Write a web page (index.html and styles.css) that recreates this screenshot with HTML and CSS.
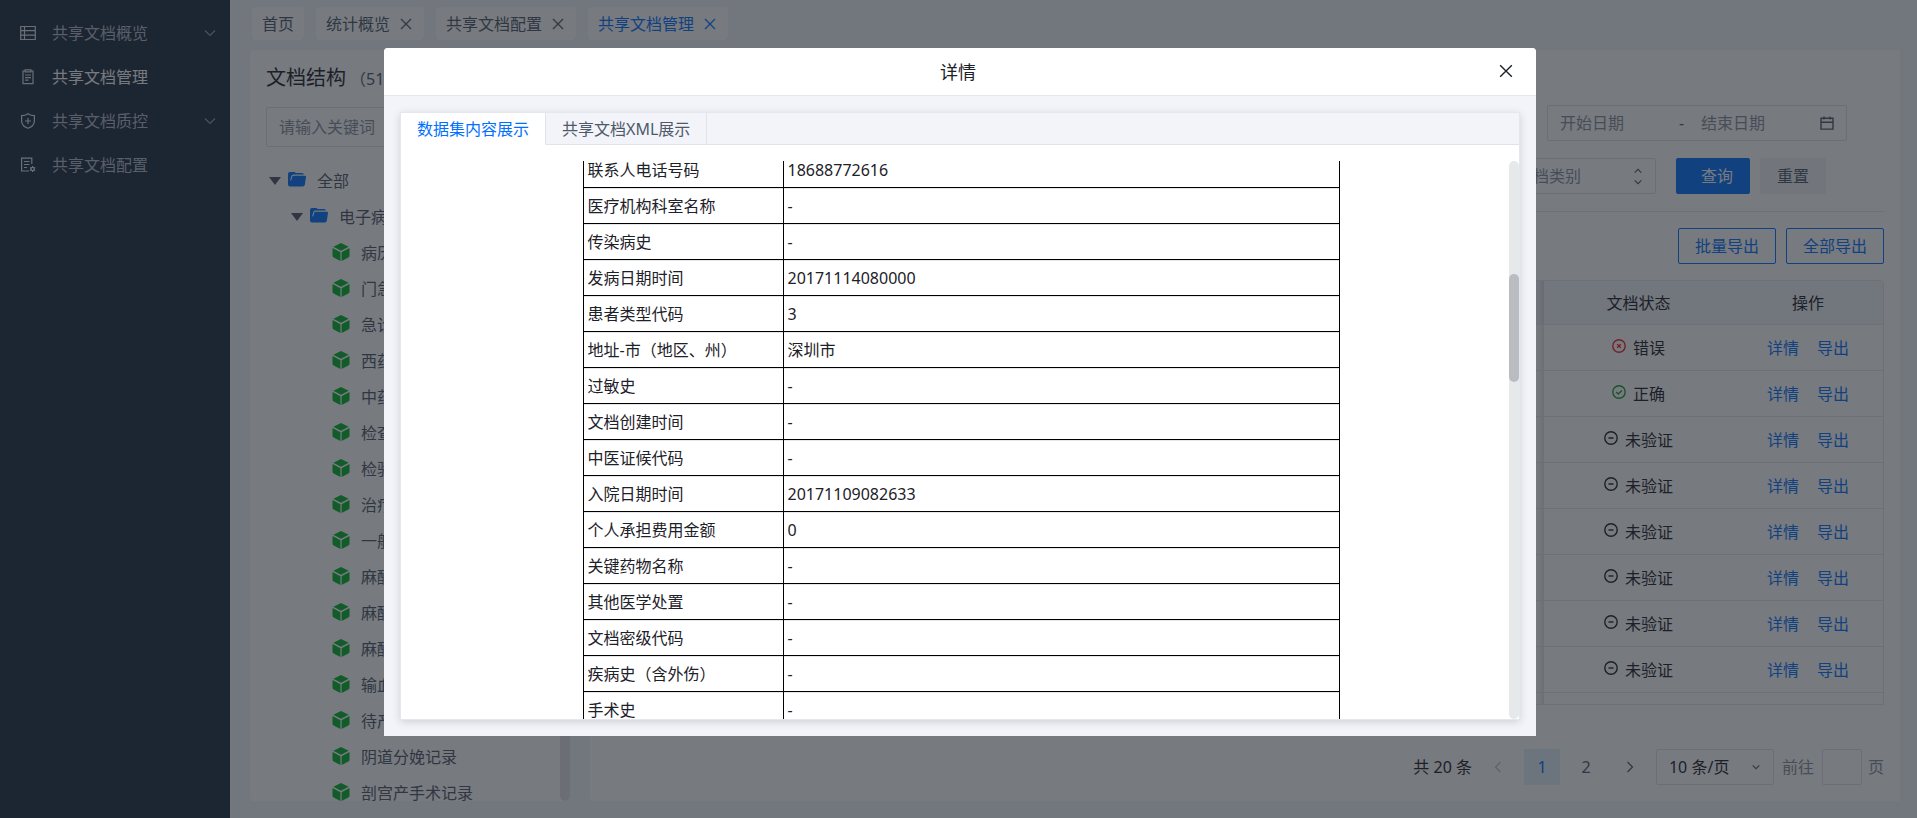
FILE: index.html
```html
<!DOCTYPE html>
<html lang="zh-CN">
<head>
<meta charset="utf-8">
<title>共享文档管理</title>
<link rel="stylesheet" href="styles.css">
</head>
<body>
<svg class="sprite" aria-hidden="true">
  <symbol id="i-list" viewBox="0 0 16 16"><path d="M.7 1.500h14.600v13H.7zM.7 5.700h14.600M.7 10.200h14.600M4.500 1.500v13"/></symbol>
  <symbol id="i-clip" viewBox="0 0 16 16"><path d="M5 2H3v12.600h10V2h-2M5 .9h6v2H5zM5 6h6M5 8.600h6M5 11.200h3.500"/></symbol>
  <symbol id="i-shield" viewBox="0 0 16 16"><path d="M8 .7c2 1.400 4 2 6.400 2v5.300c0 3.300-2.400 5.800-6.400 7.300-4-1.500-6.400-4-6.400-7.300V2.700C4 2.700 6 2.100 8 .7zM8 5v6M5 8h6"/></symbol>
  <symbol id="i-conf" viewBox="0 0 16 16"><path d="M9 14H1.600V1.200h10.200V7M4 4.500h5.500M4 7.500h5.500M4 10.500h3"/><circle cx="12.600" cy="12" r="1.600"/><path d="M12.600 9v1.400M12.600 13.600V15M10 10.500l1.200.7M14 12.800l1.200.7M10 13.500l1.200-.7M14 11.200l1.200-.7"/></symbol>
  <symbol id="i-down" viewBox="0 0 12 12"><path d="M1 3.500l5 5 5-5"/></symbol>
  <symbol id="i-up" viewBox="0 0 12 12"><path d="M1 8.500l5-5 5 5"/></symbol>
  <symbol id="i-left" viewBox="0 0 12 12"><path d="M8.500 1l-5 5 5 5"/></symbol>
  <symbol id="i-right" viewBox="0 0 12 12"><path d="M3.500 1l5 5-5 5"/></symbol>
  <symbol id="i-x" viewBox="0 0 12 12"><path d="M1 1l10 10M11 1L1 11"/></symbol>
  <symbol id="i-folder" viewBox="0 0 18 15"><path fill="currentColor" stroke="none" d="M2 0h4.500l1.300 1H14A2 2 0 0 1 16 2.600H5.400A2.200 2.200 0 0 0 3.300 4.200L2.200 8.200l1 .3 1.100-3.900A1.300 1.300 0 0 1 5.500 3.700h11.300A1.200 1.200 0 0 1 18 5.100l-1.200 7.700A2 2 0 0 1 14.800 14.500H2A2 2 0 0 1 0 12.500V2a2 2 0 0 1 2-2z"/></symbol>
  <symbol id="i-cube" viewBox="0 0 18 18"><path fill="currentColor" stroke="none" d="M9 0l7.600 3.800L9 7.800 1.400 3.800zM.5 5l7.900 4.200V18L1.700 14.600A2 2 0 0 1 .5 12.800zM17.500 5L9.600 9.200V18l6.700-3.400a2 2 0 0 0 1.200-1.800z"/></symbol>
  <symbol id="i-cal" viewBox="0 0 14 14"><path d="M1 2.200h12v10.900H1zM1 6.300h12M4 .5v3M10 .5v3"/></symbol>
  <symbol id="i-err" viewBox="0 0 14 14"><circle cx="7" cy="7" r="6.200"/><path d="M5.200 5.200l3.600 3.600M8.800 5.200L5.200 8.800"/></symbol>
  <symbol id="i-ok" viewBox="0 0 14 14"><circle cx="7" cy="7" r="6.200"/><path d="M4.200 7l2.100 2 3.600-3.600"/></symbol>
  <symbol id="i-none" viewBox="0 0 14 14"><circle cx="7" cy="7" r="6.200"/><path d="M4.500 7h5"/></symbol>
</svg>

<div class="app">
  <nav class="sidebar">
    <a class="nav-item" href="#"><svg class="ic16"><use href="#i-list"/></svg><span>共享文档概览</span><svg class="ic12"><use href="#i-down"/></svg></a>
    <a class="nav-item active" href="#"><svg class="ic16"><use href="#i-clip"/></svg><span>共享文档管理</span></a>
    <a class="nav-item" href="#"><svg class="ic16"><use href="#i-shield"/></svg><span>共享文档质控</span><svg class="ic12"><use href="#i-down"/></svg></a>
    <a class="nav-item" href="#"><svg class="ic16"><use href="#i-conf"/></svg><span>共享文档配置</span></a>
  </nav>

  <main class="main">
    <div class="page-tabs">
      <a class="page-tab" href="#">首页</a>
      <a class="page-tab" href="#">统计概览<svg class="ic12"><use href="#i-x"/></svg></a>
      <a class="page-tab" href="#">共享文档配置<svg class="ic12"><use href="#i-x"/></svg></a>
      <a class="page-tab current" href="#">共享文档管理<svg class="ic12"><use href="#i-x"/></svg></a>
    </div>

    <div class="panels">
      <section class="panel tree-panel">
        <h2 class="tree-title">文档结构<small>（51）</small></h2>
        <input class="field tree-search" type="text" placeholder="请输入关键词" aria-label="关键词">
        <div class="tree-wrap">
          <ul class="tree">
            <li class="node l1"><i class="caret"></i><svg class="folder"><use href="#i-folder"/></svg><span>全部</span></li>
            <li class="node l2"><i class="caret"></i><svg class="folder"><use href="#i-folder"/></svg><span>电子病历</span></li>
            <li class="node l3"><svg class="cube"><use href="#i-cube"/></svg><span>病历概要</span></li>
            <li class="node l3"><svg class="cube"><use href="#i-cube"/></svg><span>门急诊病历</span></li>
            <li class="node l3"><svg class="cube"><use href="#i-cube"/></svg><span>急诊留观病历</span></li>
            <li class="node l3"><svg class="cube"><use href="#i-cube"/></svg><span>西药处方</span></li>
            <li class="node l3"><svg class="cube"><use href="#i-cube"/></svg><span>中药处方</span></li>
            <li class="node l3"><svg class="cube"><use href="#i-cube"/></svg><span>检查报告</span></li>
            <li class="node l3"><svg class="cube"><use href="#i-cube"/></svg><span>检验报告</span></li>
            <li class="node l3"><svg class="cube"><use href="#i-cube"/></svg><span>治疗记录</span></li>
            <li class="node l3"><svg class="cube"><use href="#i-cube"/></svg><span>一般手术记录</span></li>
            <li class="node l3"><svg class="cube"><use href="#i-cube"/></svg><span>麻醉术前访视</span></li>
            <li class="node l3"><svg class="cube"><use href="#i-cube"/></svg><span>麻醉记录</span></li>
            <li class="node l3"><svg class="cube"><use href="#i-cube"/></svg><span>麻醉术后访视</span></li>
            <li class="node l3"><svg class="cube"><use href="#i-cube"/></svg><span>输血记录</span></li>
            <li class="node l3"><svg class="cube"><use href="#i-cube"/></svg><span>待产记录</span></li>
            <li class="node l3"><svg class="cube"><use href="#i-cube"/></svg><span>阴道分娩记录</span></li>
            <li class="node l3"><svg class="cube"><use href="#i-cube"/></svg><span>剖宫产手术记录</span></li>
          </ul>
          <div class="tree-bar"></div>
        </div>
      </section>

      <section class="panel list-panel">
        <div class="filter dates">
          <div class="field range">
            <input type="text" placeholder="开始日期" aria-label="开始日期"><span>-</span><input type="text" placeholder="结束日期" aria-label="结束日期">
            <svg class="ic14"><use href="#i-cal"/></svg>
          </div>
        </div>
        <div class="filter query">
          <div class="select-box">
            <select class="field" aria-label="文档类别"><option>请选择文档类别</option></select>
            <span class="updown"><svg><use href="#i-up"/></svg><svg><use href="#i-down"/></svg></span>
          </div>
          <button class="btn primary" type="button">查询</button>
          <button class="btn plain" type="button">重置</button>
        </div>
        <div class="actions">
          <button class="btn outline" type="button">批量导出</button>
          <button class="btn outline" type="button">全部导出</button>
        </div>
        <div class="grid-wrap">
          <table class="grid">
            <thead><tr><th class="rest"></th><th class="st">文档状态</th><th class="op">操作</th></tr></thead>
            <tbody>
              <tr><td class="rest"></td><td class="st"><span class="state"><svg class="ic14 err"><use href="#i-err"/></svg>错误</span></td><td><a href="#">详情</a><a href="#">导出</a></td></tr>
              <tr><td class="rest"></td><td class="st"><span class="state"><svg class="ic14 ok"><use href="#i-ok"/></svg>正确</span></td><td><a href="#">详情</a><a href="#">导出</a></td></tr>
              <tr><td class="rest"></td><td class="st"><span class="state"><svg class="ic14"><use href="#i-none"/></svg>未验证</span></td><td><a href="#">详情</a><a href="#">导出</a></td></tr>
              <tr><td class="rest"></td><td class="st"><span class="state"><svg class="ic14"><use href="#i-none"/></svg>未验证</span></td><td><a href="#">详情</a><a href="#">导出</a></td></tr>
              <tr><td class="rest"></td><td class="st"><span class="state"><svg class="ic14"><use href="#i-none"/></svg>未验证</span></td><td><a href="#">详情</a><a href="#">导出</a></td></tr>
              <tr><td class="rest"></td><td class="st"><span class="state"><svg class="ic14"><use href="#i-none"/></svg>未验证</span></td><td><a href="#">详情</a><a href="#">导出</a></td></tr>
              <tr><td class="rest"></td><td class="st"><span class="state"><svg class="ic14"><use href="#i-none"/></svg>未验证</span></td><td><a href="#">详情</a><a href="#">导出</a></td></tr>
              <tr><td class="rest"></td><td class="st"><span class="state"><svg class="ic14"><use href="#i-none"/></svg>未验证</span></td><td><a href="#">详情</a><a href="#">导出</a></td></tr>
              <tr><td class="rest"></td><td class="st"></td><td></td></tr>
            </tbody>
          </table>
        </div>
        <div class="pager">
          <span class="total">共 20 条</span>
          <button class="pg off" type="button" aria-label="上一页"><svg class="ic12"><use href="#i-left"/></svg></button>
          <button class="pg on" type="button">1</button>
          <button class="pg" type="button">2</button>
          <button class="pg" type="button" aria-label="下一页"><svg class="ic12"><use href="#i-right"/></svg></button>
          <div class="select-box size">
            <select class="field" aria-label="每页条数"><option>10 条/页</option></select>
            <span class="updown"><svg><use href="#i-down"/></svg></span>
          </div>
          <label class="jump">前往<input class="field" type="text">页</label>
        </div>
      </section>
    </div>
  </main>
</div>

<div class="mask">
  <div class="modal" role="dialog" aria-labelledby="dlg-title">
    <header class="modal-head">
      <h1 id="dlg-title">详情</h1>
      <button class="close" type="button" aria-label="关闭"><svg class="ic14"><use href="#i-x"/></svg></button>
    </header>
    <div class="modal-body">
      <div class="card">
        <div class="card-tabs" role="tablist">
          <button class="card-tab current" type="button" role="tab" aria-selected="true">数据集内容展示</button>
          <button class="card-tab" type="button" role="tab" aria-selected="false">共享文档XML展示</button>
        </div>
        <div class="scroller">
          <div class="view">
            <table class="data">
              <tbody>
                <tr><th scope="row">联系人电话号码</th><td>18688772616</td></tr>
                <tr><th scope="row">医疗机构科室名称</th><td>-</td></tr>
                <tr><th scope="row">传染病史</th><td>-</td></tr>
                <tr><th scope="row">发病日期时间</th><td>20171114080000</td></tr>
                <tr><th scope="row">患者类型代码</th><td>3</td></tr>
                <tr><th scope="row">地址-市（地区、州）</th><td>深圳市</td></tr>
                <tr><th scope="row">过敏史</th><td>-</td></tr>
                <tr><th scope="row">文档创建时间</th><td>-</td></tr>
                <tr><th scope="row">中医证候代码</th><td>-</td></tr>
                <tr><th scope="row">入院日期时间</th><td>20171109082633</td></tr>
                <tr><th scope="row">个人承担费用金额</th><td>0</td></tr>
                <tr><th scope="row">关键药物名称</th><td>-</td></tr>
                <tr><th scope="row">其他医学处置</th><td>-</td></tr>
                <tr><th scope="row">文档密级代码</th><td>-</td></tr>
                <tr><th scope="row">疾病史（含外伤）</th><td>-</td></tr>
                <tr><th scope="row">手术史</th><td>-</td></tr>
              </tbody>
            </table>
          </div>
          <div class="track"><div class="thumb"></div></div>
        </div>
      </div>
    </div>
  </div>
</div>
</body>
</html>
```

FILE: styles.css
```css
* { box-sizing: border-box; }

body {
  margin: 0;
  height: 100vh;
  overflow: hidden;
  font: 16px/24px "Noto Sans", "Noto Sans CJK SC", sans-serif;
  color: #1d2129;
  background: #f2f4fa;
}

a { color: inherit; text-decoration: none; }
h1, h2, ul { margin: 0; padding: 0; font-weight: 400; list-style: none; }
button, input, select { font: inherit; color: inherit; margin: 0; }
button { border: 0; background: none; padding: 0; cursor: pointer; }
svg { fill: none; stroke: currentColor; stroke-width: 1.2; flex: none; display: block; }

.sprite { position: absolute; width: 0; height: 0; }
.ic16 { width: 16px; height: 16px; }
.ic14 { width: 14px; height: 14px; }
.ic12 { width: 12px; height: 12px; }

.app { display: flex; height: 100%; }

.sidebar {
  width: 230px;
  flex: none;
  padding-top: 11px;
  background: #1d2b40;
  color: #b3bac6;
}
.nav-item {
  display: flex;
  align-items: center;
  gap: 16px;
  height: 44px;
  padding: 0 14px 0 20px;
}
.nav-item span { flex: 1; }
.nav-item .ic16 { color: #dfe3e9; }
.nav-item .ic12 { color: #8f99a8; }
.nav-item.active { color: #fff; }

.main {
  flex: 1;
  min-width: 0;
  display: flex;
  flex-direction: column;
  gap: 10px;
  padding: 7px 17px 17px 20px;
}
.page-tabs { display: flex; gap: 12px; padding-left: 2px; }
.page-tab {
  display: flex;
  align-items: center;
  gap: 10px;
  height: 33px;
  padding: 0 10px;
  border-radius: 4px;
  background: #fff;
  color: #4e5969;
}
.page-tab.current { color: #0070ff; }
.page-tab svg { margin-right: 2px; }

.panels { flex: 1; min-height: 0; display: flex; gap: 20px; }
.panel {
  display: flex;
  flex-direction: column;
  min-width: 0;
  min-height: 0;
  background: #fff;
  border-radius: 2px;
}

.field {
  height: 36px;
  border: 1px solid #e0e2e8;
  border-radius: 2px;
  background: #fff;
  padding: 0 12px;
  outline: 0;
}
::placeholder { color: #86909c; opacity: 1; }

.tree-panel { width: 320px; flex: none; padding: 16px 0 0 16px; overflow: hidden; }
.tree-title { font-size: 20px; line-height: 23px; margin-bottom: 16px; }
.tree-title small { font-size: 16px; color: #4e5969; margin-left: 4px; }
.tree-search { height: 40px; margin: 0 16px 16px 0; }
.tree-wrap { flex: 1; min-height: 0; display: flex; }
.tree { flex: 1; overflow: hidden; }
.tree-bar { width: 10px; border-radius: 5px; background: #e2e4e6; }
.node { display: flex; align-items: center; height: 36px; line-height: 16px; color: #4e5969; }
.l1 { padding-left: 3px; }
.l2 { padding-left: 25px; }
.l3 { padding-left: 66px; }
.caret {
  border: 6px solid transparent;
  border-top: 8px solid #4e5969;
  border-bottom: 0;
  margin-right: 7px;
}
.folder { width: 18px; height: 15px; margin: 0 11px 4px 0; color: #0070ff; }
.cube { width: 18px; height: 18px; margin: 0 11px 2px 0; color: #00b42a; }

.list-panel { flex: 1; padding: 55px 16px 16px; }
.filter { display: flex; justify-content: flex-end; }
.dates { padding-right: 37px; margin-bottom: 17px; }
.query { gap: 10px; padding: 0 58px 17px 0; border-bottom: 1px solid #e5e6eb; }
.range { display: flex; align-items: center; width: 300px; color: #4e5969; }
.range input { flex: 1; min-width: 0; border: 0; padding: 0; background: none; outline: 0; }
.range span { width: 22px; }
.range svg { stroke-width: 1.4; }

.select-box { position: relative; width: 200px; color: #86909c; }
.query .select-box { margin-right: 10px; }
.select-box .field { width: 100%; appearance: none; }
.updown {
  position: absolute;
  inset: 0 14px 0 auto;
  display: flex;
  flex-direction: column;
  justify-content: center;
  gap: 3px;
  color: #4e5969;
  pointer-events: none;
}
.updown svg { width: 8px; height: 8px; stroke-width: 1.6; }

.btn { height: 36px; padding: 0 17px; border-radius: 2px; }
.primary { background: #0070ff; color: #fff; padding-left: 25px; }
.plain { background: #f2f3f8; color: #4e5969; }
.outline { border: 1px solid #0070ff; color: #0070ff; padding: 0 16px; }
.actions { display: flex; justify-content: flex-end; gap: 10px; padding: 16px 0; }

.grid-wrap {
  flex: 1;
  min-height: 0;
  overflow: hidden;
  border: 1px solid #e5e6eb;
  border-radius: 4px 4px 0 0;
}
.grid { width: 100%; table-layout: fixed; border-collapse: separate; border-spacing: 0; }
.grid th, .grid td {
  height: 46px;
  padding: 0;
  border-bottom: 1px solid #e5e6eb;
  text-align: center;
  font-weight: 400;
}
.grid th { height: 44px; background: #f2f4fa; }
.grid .st { width: 189px; }
.grid .op { width: 150px; }
.grid .rest { box-shadow: inset -10px 0 8px -8px rgba(0, 0, 0, .15); }
.grid a { color: #0070ff; }
.grid a + a { margin-left: 18px; }
.state { display: inline-flex; align-items: center; gap: 7px; }
.state svg { margin-bottom: 4px; stroke-width: 1.4; }
.err { color: #f5222d; }
.ok { color: #1a9c2e; }

.pager { display: flex; justify-content: flex-end; align-items: center; margin-top: 44px; }
.total { margin-right: 8px; }
.pg {
  width: 36px;
  height: 36px;
  margin-right: 8px;
  border-radius: 2px;
  display: grid;
  place-items: center;
  color: #4e5969;
}
.pg.on { background: #e3effd; color: #0070ff; }
.pg.off { color: #c0c5cd; }
.size { width: 118px; color: #1d2129; }
.jump { display: flex; align-items: center; margin-left: 8px; color: #86909c; }
.jump .field { width: 40px; margin: 0 6px 0 8px; }

.mask {
  position: fixed;
  inset: 0;
  display: flex;
  padding: 48px 381px 82px 384px;
  background: rgba(29, 33, 41, .6);
}
.modal {
  flex: 1;
  min-width: 0;
  display: flex;
  flex-direction: column;
  background: #f2f4f9;
  border-radius: 4px 4px 0 0;
}
.modal-head {
  position: relative;
  height: 48px;
  display: grid;
  place-items: center;
  padding-right: 4px;
  background: #fff;
  border-bottom: 1px solid #e5e6eb;
  border-radius: 4px 4px 0 0;
}
.modal-head h1 { font-size: 18px; line-height: 24px; }
.close { position: absolute; right: 23px; top: 16px; }
.modal-body { flex: 1; min-height: 0; display: flex; padding: 16px; }
.card {
  flex: 1;
  min-width: 0;
  display: flex;
  flex-direction: column;
  background: #fff;
  border: 1px solid #e4e7ed;
  box-shadow: 0 2px 8px rgba(0, 0, 0, .15);
}
.card-tabs { display: flex; background: #f2f4f9; box-shadow: inset 0 -1px #e0e3ea; }
.card-tab {
  height: 32px;
  padding: 0 16px;
  border-right: 1px solid #e0e3ea;
  border-bottom: 1px solid #e0e3ea;
  color: #4e5969;
}
.card-tab.current { background: #fff; color: #0070ff; border-bottom-color: #fff; }

.scroller { flex: 1; min-height: 0; display: flex; padding-top: 16px; }
.view { flex: 1; min-width: 0; overflow: hidden; padding-left: 12px; }
.data {
  width: 757px;
  max-width: 100%;
  margin: -10px auto 0;
  table-layout: fixed;
  border-collapse: collapse;
}
.data th, .data td {
  height: 36px;
  padding: 0 4px;
  border: 1px solid #000;
  box-shadow: inset 0 1px #e5e6eb;
  line-height: 16px;
  font-weight: 400;
  text-align: left;
}
.data th { width: 200px; }
.track { width: 10px; border-radius: 5px; background: #e6e9e9; padding-top: 113px; }
.thumb { height: 108px; border-radius: 5px; background: #b9bdc1; }
```
